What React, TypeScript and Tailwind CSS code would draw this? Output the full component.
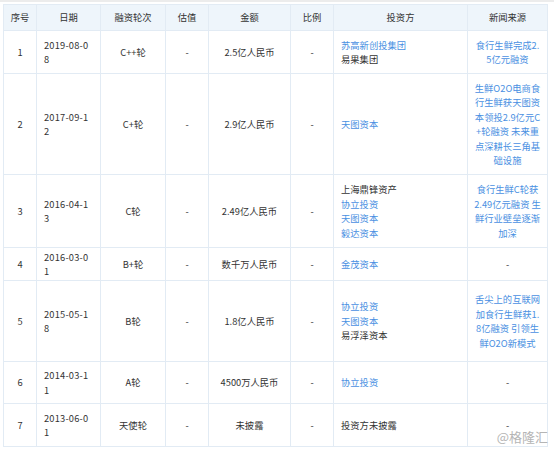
import React from "react";

type Row = {
  h: number;
  no: string;
  date: string[];
  round: string;
  val: string;
  amt: string;
  ratio: string;
  inv: { t: string; blue?: boolean }[];
  news: string[];
  newsBlue: boolean;
};

const rows: Row[] = [
  { h: 43, no: "1", date: ["2019-08-0", "8"], round: "C++轮", val: "-", amt: "2.5亿人民币", ratio: "-", inv: [{ t: "苏高新创投集团", blue: true }, { t: "易果集团" }], news: ["食行生鲜完成2.", "5亿元融资"], newsBlue: true },
  { h: 101, no: "2", date: ["2017-09-1", "2"], round: "C+轮", val: "-", amt: "2.9亿人民币", ratio: "-", inv: [{ t: "天图资本", blue: true }], news: ["生鲜O2O电商食", "行生鲜获天图资", "本领投2.9亿元C", "+轮融资 未来重", "点深耕长三角基", "础设施"], newsBlue: true },
  { h: 73, no: "3", date: ["2016-04-1", "3"], round: "C轮", val: "-", amt: "2.49亿人民币", ratio: "-", inv: [{ t: "上海鼎锋资产" }, { t: "协立投资", blue: true }, { t: "天图资本", blue: true }, { t: "毅达资本", blue: true }], news: ["食行生鲜C轮获", "2.49亿元融资 生", "鲜行业壁垒逐渐", "加深"], newsBlue: true },
  { h: 33, no: "4", date: ["2016-03-0", "1"], round: "B+轮", val: "-", amt: "数千万人民币", ratio: "-", inv: [{ t: "金茂资本", blue: true }], news: ["-"], newsBlue: false },
  { h: 81, no: "5", date: ["2015-05-1", "8"], round: "B轮", val: "-", amt: "1.8亿人民币", ratio: "-", inv: [{ t: "协立投资", blue: true }, { t: "天图资本", blue: true }, { t: "易浮泽资本" }], news: ["舌尖上的互联网", "加食行生鲜获1.", "8亿融资 引领生", "鲜O2O新模式"], newsBlue: true },
  { h: 42, no: "6", date: ["2014-03-1", "1"], round: "A轮", val: "-", amt: "4500万人民币", ratio: "-", inv: [{ t: "协立投资", blue: true }], news: ["-"], newsBlue: false },
  { h: 43, no: "7", date: ["2013-06-0", "1"], round: "天使轮", val: "-", amt: "未披露", ratio: "-", inv: [{ t: "投资方未披露" }], news: ["-"], newsBlue: false },
];

const widths = [33, 64, 65, 43, 82, 43, 134, 80];
const heads = ["序号", "日期", "融资轮次", "估值", "金额", "比例", "投资方", "新闻来源"];

export default function App() {
  return (
    <div
      className="relative w-[554px] h-[451px] bg-white overflow-hidden text-[#333]"
      style={{ fontFamily: '"Microsoft YaHei", "Noto Sans CJK SC", "Noto Sans", sans-serif' }}
    >
      <div className="h-[2px] bg-[#ececec]" />
      <div className="pl-[3px] pt-[2px]">
        <table className="table-fixed border-collapse text-[9.3px] leading-[14.5px] w-[545px]">
          <colgroup>
            {widths.map((w, i) => (
              <col key={i} style={{ width: w }} />
            ))}
          </colgroup>
          <thead>
            <tr className="h-[26px] bg-[#eef5fb]">
              {heads.map((h, i) => (
                <th key={i} className="border border-[#e2ebf4] font-normal text-center align-middle">
                  {h}
                </th>
              ))}
            </tr>
          </thead>
          <tbody>
            {rows.map((r, i) => (
              <tr key={i} style={{ height: r.h }}>
                <td className="border border-[#e2ebf4] text-center align-middle">{r.no}</td>
                <td className="border border-[#e2ebf4] text-left align-middle pl-[7px] tracking-[0.2px]">
                  {r.date.map((d, j) => (
                    <div key={j} className="whitespace-nowrap">{d}</div>
                  ))}
                </td>
                <td className="border border-[#e2ebf4] text-center align-middle">{r.round}</td>
                <td className="border border-[#e2ebf4] text-center align-middle">{r.val}</td>
                <td className="border border-[#e2ebf4] text-center align-middle">{r.amt}</td>
                <td className="border border-[#e2ebf4] text-center align-middle">{r.ratio}</td>
                <td className="border border-[#e2ebf4] text-left align-middle pl-[7px]">
                  {r.inv.map((x, j) => (
                    <div key={j} className={x.blue ? "text-[#4a90e2]" : ""}>
                      {x.t}
                    </div>
                  ))}
                </td>
                <td
                  className={
                    "border border-[#e2ebf4] text-center align-middle " +
                    (r.newsBlue ? "text-[#4a90e2]" : "")
                  }
                >
                  {r.news.map((n, j) => (
                    <div key={j} className="whitespace-nowrap">{n}</div>
                  ))}
                </td>
              </tr>
            ))}
          </tbody>
        </table>
      </div>
      <div className="absolute right-[6px] bottom-[7px] text-[13px] leading-[14px] text-[#b5b5b5]">@格隆汇</div>
    </div>
  );
}
